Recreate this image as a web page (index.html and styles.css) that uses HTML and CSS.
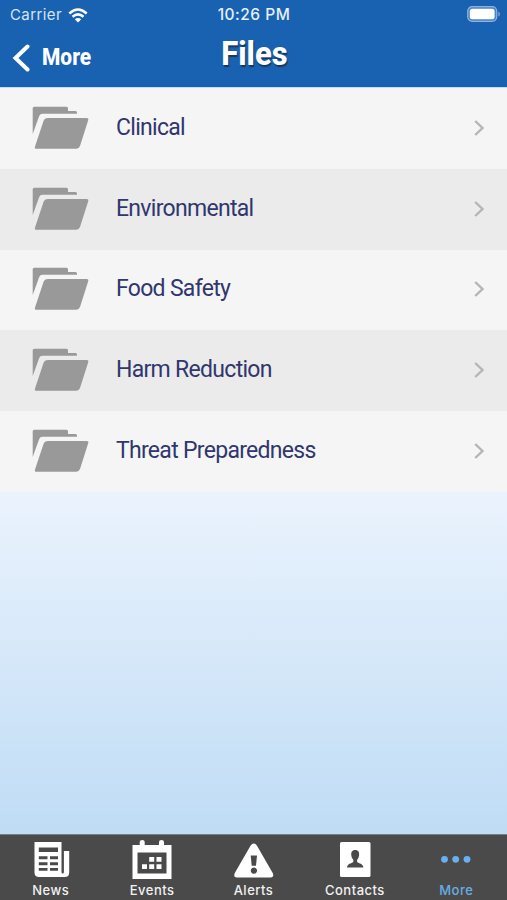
FILE: index.html
```html
<!DOCTYPE html>
<html lang="en">
<head>
  <meta charset="UTF-8" />
  <meta name="viewport" content="width=device-width, initial-scale=1.0" />
  <title>Files</title>
  <link rel="stylesheet" href="styles.css">
</head>
<body>
  <!-- Shared icons -->
  <svg class="defs" width="0" height="0">
    <symbol id="folder" viewBox="0 0 58 44">
      <path d="M.7 28V2.2Q.7.7 2.2.7H34.500q1.500 0 1.500 1.500V5h7.500q1.500 0 1.500 1.500V7.700H10.500q-2.500 0-3.300 2.300z" />
      <path d="M16 12H54.500q2.500 0 1.700 2.300L48 40q-.9 2.700-3.700 2.700H4.500q-2.300 0-1.500-2.300L11.500 15q1-3 4.500-3z" />
    </symbol>
    <symbol id="chevron" viewBox="0 0 12 18">
      <path d="M2.200 2L9.500 9L2.200 16" />
    </symbol>
  </svg>

  <header>
    <div class="status">
      <div class="carrier">
        <span>Carrier</span>
        <svg class="wifi" width="20" height="15" viewBox="0 0 20 15">
          <path d="M1.300 5.500Q10-2.500 18.700 5.500M4.500 8.800Q10 4 15.500 8.800" />
          <path class="dot" d="M6.800 11.300Q10 8.600 13.200 11.300L10 14.500z" />
        </svg>
      </div>
      <span class="time">10:26 PM</span>
      <div class="battery-wrap">
        <svg width="34" height="17" viewBox="0 0 34 17">
          <rect class="shell" x=".7" y=".7" width="29" height="14.600" rx="4.500" />
          <rect class="level" x="2.800" y="2.800" width="24.800" height="10.400" rx="2.500" />
          <path class="cap" d="M31.300 5.500q1.700 1 1.700 2.500t-1.700 2.500z" />
        </svg>
      </div>
    </div>
    <div class="titlebar">
      <a class="back" href="#">
        <svg width="18" height="28" viewBox="0 0 18 28"><path d="M15.500 2.500L3.500 14L15.500 25.500" /></svg>
        <span>More</span>
      </a>
      <h1>Files</h1>
    </div>
  </header>

  <main>
    <ul class="files">
      <li>
        <svg class="folder"><use href="#folder" /></svg>
        <span class="name">Clinical</span>
        <svg class="chevron"><use href="#chevron" /></svg>
      </li>
      <li>
        <svg class="folder"><use href="#folder" /></svg>
        <span class="name">Environmental</span>
        <svg class="chevron"><use href="#chevron" /></svg>
      </li>
      <li>
        <svg class="folder"><use href="#folder" /></svg>
        <span class="name">Food Safety</span>
        <svg class="chevron"><use href="#chevron" /></svg>
      </li>
      <li>
        <svg class="folder"><use href="#folder" /></svg>
        <span class="name">Harm Reduction</span>
        <svg class="chevron"><use href="#chevron" /></svg>
      </li>
      <li>
        <svg class="folder"><use href="#folder" /></svg>
        <span class="name">Threat Preparedness</span>
        <svg class="chevron"><use href="#chevron" /></svg>
      </li>
    </ul>
  </main>

  <nav class="tabs">
    <a href="#">
      <svg width="40" height="42" viewBox="0 0 40 42">
        <path fill-rule="evenodd" d="M3.500 3H30.500V33q0 1.500 1.200 1.500t1.200-1.500V12H38.200V33.500q0 4.500-4.500 4.500H8.200q-4.700 0-4.700-4.500zM7.800 8.500v4.500H27v-4.500zM7.800 17.300v3H16.500v-3zM19 17.300v3H27v-3zM7.800 23.200v3H16.500v-3zM19 23.200v3H27v-3zM7.800 29v2.700H16.500V29zM19 29v2.700H27V29z" />
      </svg>
      <span>News</span>
    </a>
    <a href="#">
      <svg width="40" height="42" viewBox="0 0 40 42">
        <path fill-rule="evenodd" d="M.5 6H7.700V3q0-2 2.500-2t2.500 2V6H27V3q0-2 2.500-2t2.500 2V6H39.500V40H.5zM5.500 13.500V34.500H34.500V13.500z" />
        <path d="M17.200 18h5v4.700h-5zM24.500 18h5v4.700h-5zM10 25.200h5v4.700h-5zM17.200 25.200h5v4.700h-5zM24.500 25.200h5v4.700h-5z" />
      </svg>
      <span>Events</span>
    </a>
    <a href="#">
      <svg width="40" height="42" viewBox="0 0 40 42">
        <path fill-rule="evenodd" d="M16.500 6.700Q19.700 2.500 23 6.700L38.700 34Q40.500 38.500 36.500 38.500H2.800Q-1 38.500.8 34zM16.700 16.500L17.700 26.800H22L23 16.500zM19.900 28.500a3.100 3.100 0 1 0 .01 0z" />
      </svg>
      <span>Alerts</span>
    </a>
    <a href="#">
      <svg width="40" height="42" viewBox="0 0 40 42">
        <path fill-rule="evenodd" d="M6.500 3H34q1.500 0 1.500 1.500V36.500q0 1.500-1.500 1.500H6.500Q5 38 5 36.500V4.500Q5 3 6.500 3zM20.200 11c-3.300 0-4.200 2.500-3.900 5.200.2 2.200 1.200 3.500 2 4.500v2.300c-2 1.700-6 1.400-6.300 5.500H28.400c-.3-4.100-4.300-3.800-6.300-5.500v-2.300c.8-1 1.800-2.300 2-4.500.3-2.700-.6-5.200-3.900-5.200z" />
      </svg>
      <span>Contacts</span>
    </a>
    <a class="active" href="#">
      <svg width="40" height="42" viewBox="0 0 40 42">
        <circle cx="8.500" cy="20.300" r="3.400" />
        <circle cx="19.700" cy="20.300" r="3.400" />
        <circle cx="31" cy="20.300" r="3.400" />
      </svg>
      <span>More</span>
    </a>
  </nav>
</body>
</html>
```

FILE: styles.css
```css
/* Reset and base styles */
* {
  box-sizing: border-box;
  margin: 0;
  padding: 0;
}
body {
  font-family: Roboto, "Open Sans", sans-serif;
  height: 900px;
  display: flex;
  flex-direction: column;
  overflow: hidden;
}
a {
  color: inherit;
  text-decoration: none;
}
svg {
  display: block;
  flex: none;
}
.defs {
  position: absolute;
}

/* Header styles */
header {
  height: 88px;
  background: #1962b1;
  border-bottom: 1px solid #c5dcf2;
  color: #fff;
}
.status {
  display: grid;
  grid-template-columns: 1fr auto 1fr;
  height: 30px;
  padding: 0 6px 0 10px;
  align-items: center;
  font-family: Inter, sans-serif;
  font-size: 15px;
  line-height: 30px;
}
.carrier {
  display: flex;
  align-items: center;
  gap: 6px;
  color: #d5e5f6;
  letter-spacing: 0.4px;
}
.wifi path {
  fill: none;
  stroke: #fff;
  stroke-width: 2.5;
}
.wifi .dot {
  fill: #fff;
  stroke: none;
}
.time {
  font-size: 15.5px;
  font-weight: 500;
  letter-spacing: 0.5px;
  color: #e6f0fb;
  transform: translateX(-1.5px);
}
.battery-wrap {
  display: flex;
  justify-content: flex-end;
  padding-bottom: 1px;
}
.shell {
  fill: #4b83c4;
  stroke: #8fb3de;
  stroke-width: 1.2;
}
.level {
  fill: #fff;
}
.cap {
  fill: #7ba6d8;
}
.titlebar {
  display: grid;
  grid-template-columns: 1fr auto 1fr;
  height: 57px;
  padding-left: 12px;
}
.back {
  display: flex;
  align-items: center;
  gap: 12px;
  height: 55px;
  font-size: 23px;
  font-weight: 800;
}
.back path {
  fill: none;
  stroke: #fff;
  stroke-width: 4;
  stroke-linecap: round;
}
.back span {
  transform: scaleX(0.91);
  transform-origin: left;
}
h1 {
  font-size: 34px;
  line-height: 46px;
  font-weight: 800;
  text-shadow: 1px 2px 1px #17375f;
  transform: translateX(-5px) scaleX(0.91);
}

/* File list */
main {
  flex: 1;
  background: linear-gradient(#f4f8fe 0, #ebf3fd 54%, #bfdcf5 100%);
}
.files {
  list-style: none;
}
.files li {
  display: flex;
  align-items: center;
  height: 80.800px;
  padding: 0 22px 1px 32px;
  background: #f5f5f5;
}
.files li:nth-child(even) {
  background: #ebebeb;
}
.folder {
  width: 58px;
  height: 44px;
  fill: #999;
}
.name {
  flex: 1;
  margin-left: 26px;
  padding-bottom: 1px;
  font-size: 23px;
  letter-spacing: -0.7px;
  color: #30376d;
}
.chevron {
  width: 12px;
  height: 18px;
  fill: none;
  stroke: #b5b5b5;
  stroke-width: 2.400;
}

/* Bottom tabs */
.tabs {
  display: flex;
  height: 66px;
  background: #4a4a4a;
  border-top: 1px solid #777f86;
}
.tabs a {
  flex: 1;
  display: flex;
  flex-direction: column;
  align-items: center;
  padding-top: 4px;
  font-family: Inter, sans-serif;
  font-size: 13px;
  font-weight: 500;
  line-height: 18px;
  letter-spacing: 0.5px;
  color: #f2f2f2;
}
.tabs svg {
  fill: #fff;
}
.tabs .active {
  color: #68aee5;
}
.tabs .active svg {
  fill: #68b1ee;
}
```
